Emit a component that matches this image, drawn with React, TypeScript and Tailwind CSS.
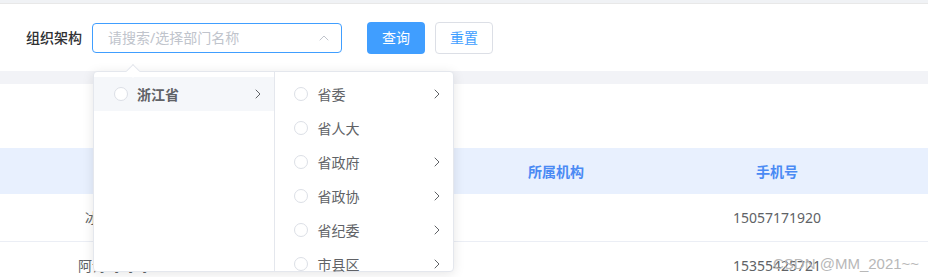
import { ChevronRight, ChevronUp } from "lucide-react";

const font = { fontFamily: '"Noto Sans", "Noto Sans CJK SC", sans-serif' };

const rightItems = [
  { name: "省委", sub: true },
  { name: "省人大", sub: false },
  { name: "省政府", sub: true },
  { name: "省政协", sub: true },
  { name: "省纪委", sub: true },
  { name: "市县区", sub: true },
];

const rows = [
  { name: "冰冰冰冰", phone: "15057171920" },
  { name: "阿诗玛玛玛", phone: "15355425721" },
];

function Radio() {
  return <span className="h-[14px] w-[14px] shrink-0 rounded-full border border-[#dcdfe6] bg-white" />;
}

export default function App() {
  return (
    <div className="relative h-[277px] w-full overflow-hidden bg-white text-[14px] text-[#606266]" style={font}>
      <div className="h-[4px] border-b border-[#e8e8e8] bg-[#f0f2f5]" />

      {/* 搜索栏 */}
      <div className="flex h-[67px] items-center pl-[26px]">
        <span className="mr-[10px] font-medium text-[#303133]">组织架构</span>
        <div className="flex h-[30px] w-[250px] items-center justify-between rounded-[4px] border border-[#409eff] pl-[15px] pr-[9px]">
          <span className="text-[#c0c4cc]">请搜索/选择部门名称</span>
          <ChevronUp className="h-[16px] w-[16px] text-[#c0c4cc]" strokeWidth={1.5} />
        </div>
        <button className="ml-[25px] h-[32px] w-[58px] rounded-[4px] bg-[#409eff] text-white">查询</button>
        <button className="ml-[10px] h-[32px] w-[58px] rounded-[4px] border border-[#dcdfe6] bg-white text-[#409eff]">重置</button>
      </div>

      <div className="h-[13px] bg-[#f2f3f7]" />

      {/* 表格 */}
      <div className="pt-[64px]">
        <div className="grid h-[46px] grid-cols-[226px_219px_222px_220px_1fr] items-center bg-[#e8f0fe] font-bold text-[#4a8af4]">
          <span className="text-center">姓名</span>
          <span className="text-center">性别</span>
          <span className="text-center">所属机构</span>
          <span className="text-center">手机号</span>
          <span />
        </div>
        {rows.map((r) => (
          <div key={r.phone} className="grid h-[48px] grid-cols-[226px_219px_222px_220px_1fr] items-center border-b border-[#ebeef5] text-[#606266]">
            <span className="text-center">{r.name}</span>
            <span />
            <span />
            <span className="text-center">{r.phone}</span>
            <span />
          </div>
        ))}
      </div>

      {/* 级联下拉 */}
      <div className="absolute left-[93px] top-[71px] flex h-[201px] w-[361px] rounded-[4px] border border-[#e4e7ed] bg-white shadow-[0_2px_12px_rgba(0,0,0,0.1)]">
        <span className="absolute -top-[6px] left-[34px] h-[10px] w-[10px] rotate-45 border-l border-t border-[#e4e7ed] bg-white" />
        <div className="w-[180px] pt-[5px]">
          <div className="flex h-[34px] items-center bg-[#f5f7fa] pl-[20px] pr-[8px]">
            <Radio />
            <span className="ml-[9px] flex-1 font-bold text-[#606266]">浙江省</span>
            <ChevronRight className="h-[16px] w-[16px] text-[#606266]" strokeWidth={1.5} />
          </div>
        </div>
        <div className="w-[180px] border-l border-[#e4e7ed] pt-[5px]">
          {rightItems.map((it) => (
            <div key={it.name} className="flex h-[34px] items-center pl-[19px] pr-[8px]">
              <Radio />
              <span className="ml-[10px] flex-1">{it.name}</span>
              {it.sub && <ChevronRight className="h-[16px] w-[16px] text-[#606266]" strokeWidth={1.5} />}
            </div>
          ))}
        </div>
      </div>

      <span className="absolute left-[773px] top-[253px] whitespace-nowrap text-[15px] text-[#b8b8b8]" style={{ fontFamily: '"Liberation Sans", Arial, sans-serif' }}>
        CSDN @MM_2021~~
      </span>
    </div>
  );
}
